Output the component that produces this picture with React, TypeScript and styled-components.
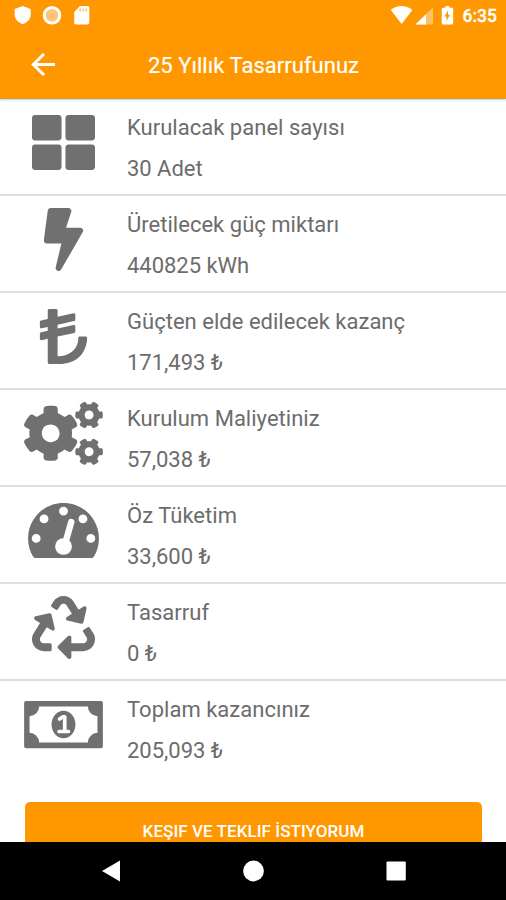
import React from "react";
import styled, { createGlobalStyle } from "styled-components";
import { FaThLarge, FaBolt, FaLiraSign, FaCogs, FaRecycle } from "react-icons/fa";

const ORANGE = "#ff9800";

const GlobalStyle = createGlobalStyle`
  * { box-sizing: border-box; }
  body { margin: 0; background: #fff; font-family: Roboto, "Liberation Sans", sans-serif; }
`;

const Screen = styled.div`
  display: flex;
  flex-direction: column;
  width: 506px;
  height: 900px;
  overflow: hidden;
  background: #fff;
`;

const Header = styled.header`
  flex: none;
  height: 99px;
  background: ${ORANGE};
  color: #fff;
  border-bottom: 1px solid #e39a35;
  box-shadow: 0 1px 2px #b9cbd9;
`;

const StatusBar = styled.div`
  display: flex;
  justify-content: space-between;
  height: 32px;
  padding: 0 9px 0 14px;
`;

const StatusGroup = styled.div`
  display: flex;
  align-items: center;
  svg { display: block; }
`;

const Clock = styled.span`
  margin-left: 9px;
  font-size: 17.5px;
  font-weight: 500;
  line-height: 32px;
  -webkit-text-stroke: 0.3px #fff;
`;

const TitleBar = styled.div`
  display: grid;
  grid-template-columns: 60px 1fr 60px;
  align-items: center;
  height: 66px;
`;

const BackButton = styled.button`
  display: flex;
  padding: 0 0 0 31px;
  border: 0;
  background: none;
`;

const Title = styled.h1`
  margin: 0;
  padding: 2px 0 0 1px;
  text-align: center;
  font-size: 22px;
  font-weight: 400;
  line-height: 30px;
  letter-spacing: 0.03px;
  -webkit-text-stroke: 0.2px #fff;
`;

const Content = styled.main`
  flex: 1;
  min-height: 0;
  overflow: hidden;
`;

const Row = styled.section`
  display: flex;
  height: 97px;
  border-bottom: 2px solid #dedede;
  &:last-of-type { border-bottom-color: transparent; }
`;

const IconCell = styled.div`
  flex: none;
  width: 127px;
  padding: 12px 0 0 24px;
  color: #707070;
  svg { display: block; width: 79px; height: 63px; }
`;

const Texts = styled.div`
  padding-top: 8px;
  color: #6c6c6c;
  font-size: 22px;
  letter-spacing: 0.02px;
  line-height: 41px;
`;

const Label = styled.div`
  height: 41px;
  white-space: nowrap;
`;

const Value = styled(Label)`
  letter-spacing: -0.03px;
`;

const RequestButton = styled.button`
  display: block;
  width: 457px;
  height: 58px;
  margin: 24px 0 0 25px;
  padding: 0;
  border: 0;
  border-radius: 5px;
  background: ${ORANGE};
  color: #fff;
  font: 500 17px/58px Roboto, sans-serif;
  letter-spacing: 0.06px;
`;

const NavBar = styled.nav`
  flex: none;
  display: flex;
  justify-content: center;
  height: 58px;
  padding-top: 18px;
  gap: 122px;
  background: #000;
  svg { display: block; }
`;

const Gauge = () => (
  <svg viewBox="0 0 576 512" fill="currentColor">
    <path
      fillRule="evenodd"
      d="M288 32C129 32 0 161 0 320c0 53 14 102 39 145 6 10 16 15 27 15h444c11 0 21-5 27-15 25-43 39-92 39-145C576 161 447 32 288 32z
      M288 62a36 36 0 1 1 0 72a36 36 0 1 1 0-72z
      M130 126a36 36 0 1 1 0 72a36 36 0 1 1 0-72z
      M446 126a36 36 0 1 1 0 72a36 36 0 1 1 0-72z
      M66 284a36 36 0 1 1 0 72a36 36 0 1 1 0-72z
      M510 284a36 36 0 1 1 0 72a36 36 0 1 1 0-72z"
    />
    <circle cx="288" cy="386" r="68" fill="#fff" />
    <path d="M351 188L296 380" stroke="#fff" strokeWidth="52" strokeLinecap="round" />
  </svg>
);

const Banknote = () => (
  <svg viewBox="0 0 640 512" fill="currentColor">
    <path
      fillRule="evenodd"
      d="M16 64H624a16 16 0 0 1 16 16V432a16 16 0 0 1-16 16H16a16 16 0 0 1-16-16V80a16 16 0 0 1 16-16z
      M122 110a78 78 0 0 1-78 78V324a78 78 0 0 1 78 78H518a78 78 0 0 1 78-78V188a78 78 0 0 1-78-78z"
    />
    <ellipse cx="320" cy="256" rx="97" ry="112" />
    <path
      d="M288 211l28-18h14V312M284 313h76"
      fill="none"
      stroke="#fff"
      strokeWidth="30"
      strokeLinejoin="round"
      strokeLinecap="round"
    />
  </svg>
);

const rows = [
  { icon: <FaThLarge />, label: "Kurulacak panel sayısı", value: "30 Adet" },
  { icon: <FaBolt />, label: "Üretilecek güç miktarı", value: "440825 kWh" },
  { icon: <FaLiraSign />, label: "Güçten elde edilecek kazanç", value: "171,493 ₺" },
  { icon: <FaCogs />, label: "Kurulum Maliyetiniz", value: "57,038 ₺" },
  { icon: <Gauge />, label: "Öz Tüketim", value: "33,600 ₺" },
  { icon: <FaRecycle />, label: "Tasarruf", value: "0 ₺" },
  { icon: <Banknote />, label: "Toplam kazancınız", value: "205,093 ₺" },
];

export default function App() {
  return (
    <Screen>
      <GlobalStyle />
      <Header>
        <StatusBar>
          <StatusGroup>
            <svg width="80" height="32" viewBox="0 0 80 32" fill="#fff">
              <path d="M8.7 6l8 3v5.500c0 4.500-3.200 8-8 9.700c-4.800-1.700-8-5.200-8-9.700V9z" />
              <circle cx="38" cy="15.300" r="7.800" fill="#ffc477" stroke="#fff" strokeWidth="3" />
              <path d="M66 6h7.300c1.200 0 2 .8 2 2v14.500c0 1.200-.8 2-2 2H62.200c-1.200 0-2-.8-2-2V12z" />
              <path d="M66.200 8.500v3M69.200 8.500v3M72.200 8.500v3" stroke="#ffb54a" strokeWidth="1.300" />
            </svg>
          </StatusGroup>
          <StatusGroup>
            <svg width="64" height="32" viewBox="0 0 64 32" fill="#fff">
              <path d="M.8 10C7 4.800 16 4.800 22.400 10L11.600 24z" />
              <path d="M43 7.500V24.500H25.500z" opacity=".4" />
              <path d="M36 14.300V24.500H25.500z" />
              <path d="M55.500 6h4v1.700h2.300c.8 0 1.400.6 1.400 1.400v14c0 .9-.6 1.500-1.400 1.500h-8.700c-.8 0-1.400-.6-1.400-1.500v-14c0-.8.6-1.400 1.400-1.400h2.400z" />
              <path d="M58 10.500v4.300h2l-3.500 6.200v-4.500h-2z" fill={ORANGE} />
            </svg>
            <Clock>6:35</Clock>
          </StatusGroup>
        </StatusBar>
        <TitleBar>
          <BackButton aria-label="Geri">
            <svg width="25" height="24" viewBox="0 0 25 24" fill="none" stroke="#fff" strokeWidth="3">
              <path d="M24 11.500H2.500M13 1L2.300 11.500L13 22" />
            </svg>
          </BackButton>
          <Title>25 Yıllık Tasarrufunuz</Title>
        </TitleBar>
      </Header>
      <Content>
        {rows.map((r) => (
          <Row key={r.label}>
            <IconCell>{r.icon}</IconCell>
            <Texts>
              <Label>{r.label}</Label>
              <Value>{r.value}</Value>
            </Texts>
          </Row>
        ))}
        <RequestButton>KEŞIF VE TEKLIF İSTIYORUM</RequestButton>
      </Content>
      <NavBar>
        <svg width="20" height="22" viewBox="0 0 20 22" fill="#fff">
          <path d="M20 .5v21L2 11z" />
        </svg>
        <svg width="22" height="22" viewBox="0 0 22 22" fill="#fff">
          <circle cx="11.500" cy="11" r="10.400" />
        </svg>
        <svg width="20" height="22" viewBox="0 0 20 22" fill="#fff">
          <rect x=".5" y="1.500" width="19.300" height="19" rx="1" />
        </svg>
      </NavBar>
    </Screen>
  );
}
